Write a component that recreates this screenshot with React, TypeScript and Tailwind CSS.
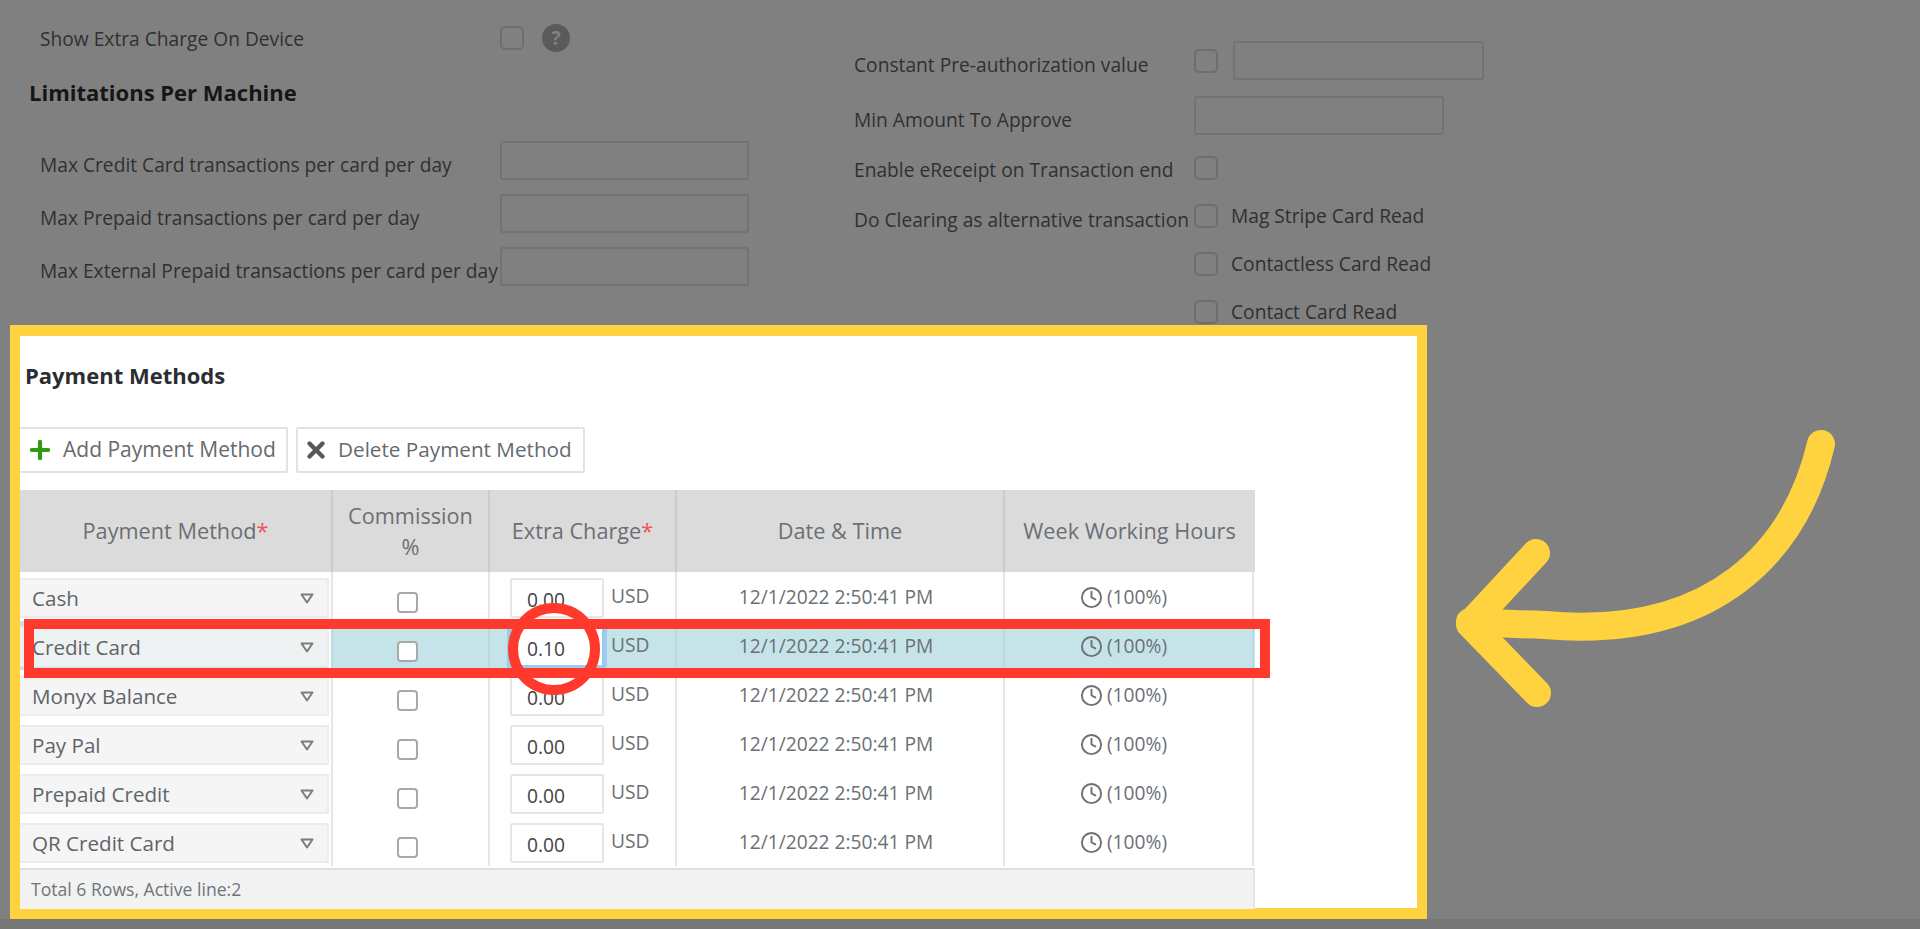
import { Clock, Plus, X } from "lucide-react";

const FONT = "font-['Open_Sans','Noto_Sans',sans-serif]";

interface IPaymentRow {
  name: string;
  extra: string;
  active?: boolean;
}

const ROWS: IPaymentRow[] = [
  { name: "Cash", extra: "0.00" },
  { name: "Credit Card", extra: "0.10", active: true },
  { name: "Monyx Balance", extra: "0.00" },
  { name: "Pay Pal", extra: "0.00" },
  { name: "Prepaid Credit", extra: "0.00" },
  { name: "QR Credit Card", extra: "0.00" },
];

const COLUMNS = "grid grid-cols-[311px_157px_187px_328px_251px]";

function DimCheckbox() {
  return (
    <span className="block w-6 h-6 shrink-0 rounded-[5px] border-2 border-[#6e6e6e]" />
  );
}

function DimInput({ className }: { className: string }) {
  return <div className={`border-2 border-[#737373] rounded-[2px] h-[39px] ${className}`} />;
}

function LimitRow({ label, top }: { label: string; top: string }) {
  return (
    <div className={`flex items-center h-[39px] ${top}`}>
      <span className="w-[500px] pl-[40px] pt-[9px] whitespace-nowrap">{label}</span>
      <DimInput className="w-[249px]" />
    </div>
  );
}

function LeftSettings() {
  return (
    <div className="w-[854px] shrink-0">
      <div className="flex items-center h-[27px] mt-[24px]">
        <span className="w-[500px] pl-[40px] pt-[3px]">Show Extra Charge On Device</span>
        <DimCheckbox />
        <span className="ml-[18px] flex items-center justify-center w-[28px] h-[28px] rounded-full bg-[#5a5a5a] text-[#808080] text-[20px] font-bold">
          ?
        </span>
      </div>
      <h2 className="mt-[27px] pl-[29px] text-[22px] leading-[28px] font-bold text-[#161616]">
        Limitations Per Machine
      </h2>
      <LimitRow label="Max Credit Card transactions per card per day" top="mt-[35px]" />
      <LimitRow label="Max Prepaid transactions per card per day" top="mt-[14px]" />
      <LimitRow label="Max External Prepaid transactions per card per day" top="mt-[14px]" />
    </div>
  );
}

function CardReadRow({ label, top }: { label: string; top: string }) {
  return (
    <div className={`flex items-center h-[24px] ml-[340px] ${top}`}>
      <DimCheckbox />
      <span className="ml-[13px] whitespace-nowrap">{label}</span>
    </div>
  );
}

function RightSettings() {
  return (
    <div className="flex-1">
      <div className="flex items-center h-[39px] mt-[41px]">
        <span className="w-[340px] pt-[9px] whitespace-nowrap">Constant Pre-authorization value</span>
        <DimCheckbox />
        <DimInput className="ml-[15px] w-[251px]" />
      </div>
      <div className="flex items-center h-[39px] mt-[16px]">
        <span className="w-[340px] pt-[9px]">Min Amount To Approve</span>
        <DimInput className="w-[250px]" />
      </div>
      <div className="flex items-center h-[25px] mt-[20px]">
        <span className="w-[340px] pt-[5px] whitespace-nowrap">Enable eReceipt on Transaction end</span>
        <DimCheckbox />
      </div>
      <div className="relative">
        <span className="absolute left-0 top-[2px] whitespace-nowrap">Do Clearing as alternative transaction</span>
        <CardReadRow label="Mag Stripe Card Read" top="mt-[24px]" />
        <CardReadRow label="Contactless Card Read" top="mt-[24px]" />
        <CardReadRow label="Contact Card Read" top="mt-[24px]" />
      </div>
    </div>
  );
}

function ToolbarButton({ icon, label, className }: { icon: React.ReactNode; label: string; className: string }) {
  return (
    <button
      type="button"
      className={`flex items-center h-[46px] bg-white border-2 border-[#e2e2e2] rounded-[2px] text-[#666a6e] ${className}`}
    >
      {icon}
      <span className="whitespace-nowrap">{label}</span>
    </button>
  );
}

function SelectArrow() {
  return (
    <svg width="14" height="11" viewBox="0 0 14 11" className="shrink-0">
      <path d="M1.5 1.5h11L7 9.5z" fill="#f5f5f5" stroke="#7d7d7d" strokeWidth="2" strokeLinejoin="round" />
    </svg>
  );
}

function MethodRow({ row }: { row: IPaymentRow }) {
  const cellLine = row.active ? "border-[#bcd9df]" : "border-[#e6e6e6]";
  return (
    <div className={`${COLUMNS} h-[49px] ${row.active ? "bg-[#c5e4ea]" : "bg-white"}`}>
      <div className="pt-[6px] border-r-2 border-white">
        <div
          className={`flex items-center justify-between h-[40px] pl-[12px] pr-[13px] border-2 border-l-0 border-[#ececec] ${
            row.active ? "bg-[#eef2f3]" : "bg-[#f5f5f5]"
          }`}
        >
          <span className="text-[20.6px] text-[#5f6468]">{row.name}</span>
          <SelectArrow />
        </div>
      </div>
      <div className={`flex justify-center pt-[20px] border-l-2 ${cellLine}`}>
        <span className="block w-[21px] h-[21px] -ml-[6px] bg-white rounded-[4px] border-2 border-[#a8a8a8]" />
      </div>
      <div className={`flex items-start pt-[6px] pl-[20px] border-l-2 ${cellLine}`}>
        <div
          className={`w-[94px] h-[40px] pl-[15px] pt-[8px] leading-[24px] bg-white text-[#3f4347] border-2 rounded-[2px] ${
            row.active ? "border-[#9ccbee] shadow-[0_0_0_3px_#9ccbee]" : "border-[#e6e6e6]"
          }`}
        >
          {row.extra}
        </div>
        <span className="ml-[7px] mt-[6px] leading-[24px] text-[#6d7074]">USD</span>
      </div>
      <div className={`flex justify-center pt-[13px] pr-[8px] border-l-2 leading-[24px] text-[#6d7074] ${cellLine}`}>
        12/1/2022 2:50:41 PM
      </div>
      <div className={`flex justify-center items-start pt-[13px] pr-[10px] gap-[4px] border-x-2 leading-[24px] text-[#6d7074] ${cellLine}`}>
        <Clock size={23} strokeWidth={2} className="mt-[1px] shrink-0" />
        <span>(100%)</span>
      </div>
    </div>
  );
}

function PaymentMethods() {
  return (
    <section className="relative ml-[10px] w-[1417px] h-[594px] bg-white border-x-[10px] border-y-[11px] border-[#ffd240] shrink-0">
      <h2 className="pt-[25px] pl-[5px] text-[22px] leading-[28px] font-bold text-[#2a2e32]">Payment Methods</h2>
      <div className="flex gap-[8px] mt-[38px]">
        <ToolbarButton
          icon={<Plus size={28} strokeWidth={3.6} className="ml-[6px] mr-[9px] text-[#2f9a12]" />}
          label="Add Payment Method"
          className="w-[268px] border-l-0 text-[21px]"
        />
        <ToolbarButton
          icon={<X size={26} strokeWidth={4} className="ml-[5px] mr-[9px] text-[#55595d]" />}
          label="Delete Payment Method"
          className="w-[289px] text-[20.7px]"
        />
      </div>
      <div className="w-[1235px] mt-[17px]">
        <div className={`${COLUMNS} h-[82px] bg-[#dbdbdb] text-[21.7px] text-[#6b6f73] text-center`}>
          <div className="flex items-center justify-center">
            Payment Method<span className="text-[#f0535a]">*</span>
          </div>
          <div className="flex flex-col justify-center border-l-2 border-[#cbcbcb] leading-[31px]">
            <span>Commission</span>
            <span>%</span>
          </div>
          <div className="flex items-center justify-center border-l-2 border-[#cbcbcb]">
            Extra Charge<span className="text-[#f0535a]">*</span>
          </div>
          <div className="flex items-center justify-center border-l-2 border-[#cbcbcb]">Date &amp; Time</div>
          <div className="flex items-center justify-center border-l-2 border-[#cbcbcb]">Week Working Hours</div>
        </div>
        {ROWS.map((row) => (
          <MethodRow key={row.name} row={row} />
        ))}
        <div className="h-[41px] mt-[2px] pl-[11px] pt-[7px] text-[17.6px] leading-[24px] text-[#70757a] bg-[#f2f2f2] border-t-2 border-[#e0e0e0] border-r-2 border-r-[#e6e6e6]">
          Total 6 Rows, Active line:2
        </div>
      </div>
      {/* annotation: red box round the active row */}
      <div className="absolute left-[4px] top-[283px] w-[1246px] h-[59px] border-[10px] border-[#ff3a2c]" />
      {/* annotation: red ring round the edited value */}
      <div className="absolute left-[488px] top-[267px] w-[92px] h-[92px] rounded-full border-[10px] border-[#ff3a2c]" />
    </section>
  );
}

export default function App() {
  return (
    <div className={`relative w-[1920px] h-[929px] overflow-hidden bg-[#808080] flex flex-col text-[19.2px] text-[#303030] ${FONT}`}>
      <div className="flex h-[325px] shrink-0">
        <LeftSettings />
        <RightSettings />
      </div>
      <PaymentMethods />
      <div className="flex-1 bg-[#777777]" />
      <svg
        className="absolute left-[1440px] top-[420px]"
        width="400"
        height="300"
        viewBox="1440 420 400 300"
        fill="none"
        stroke="#ffd240"
        strokeWidth="28"
        strokeLinecap="round"
        strokeLinejoin="round"
      >
        <path d="M1821 444C1796 550 1715 640 1545 625Q1508 624 1470 622" />
        <path d="M1536 553L1470 624L1537 693" />
      </svg>
    </div>
  );
}
